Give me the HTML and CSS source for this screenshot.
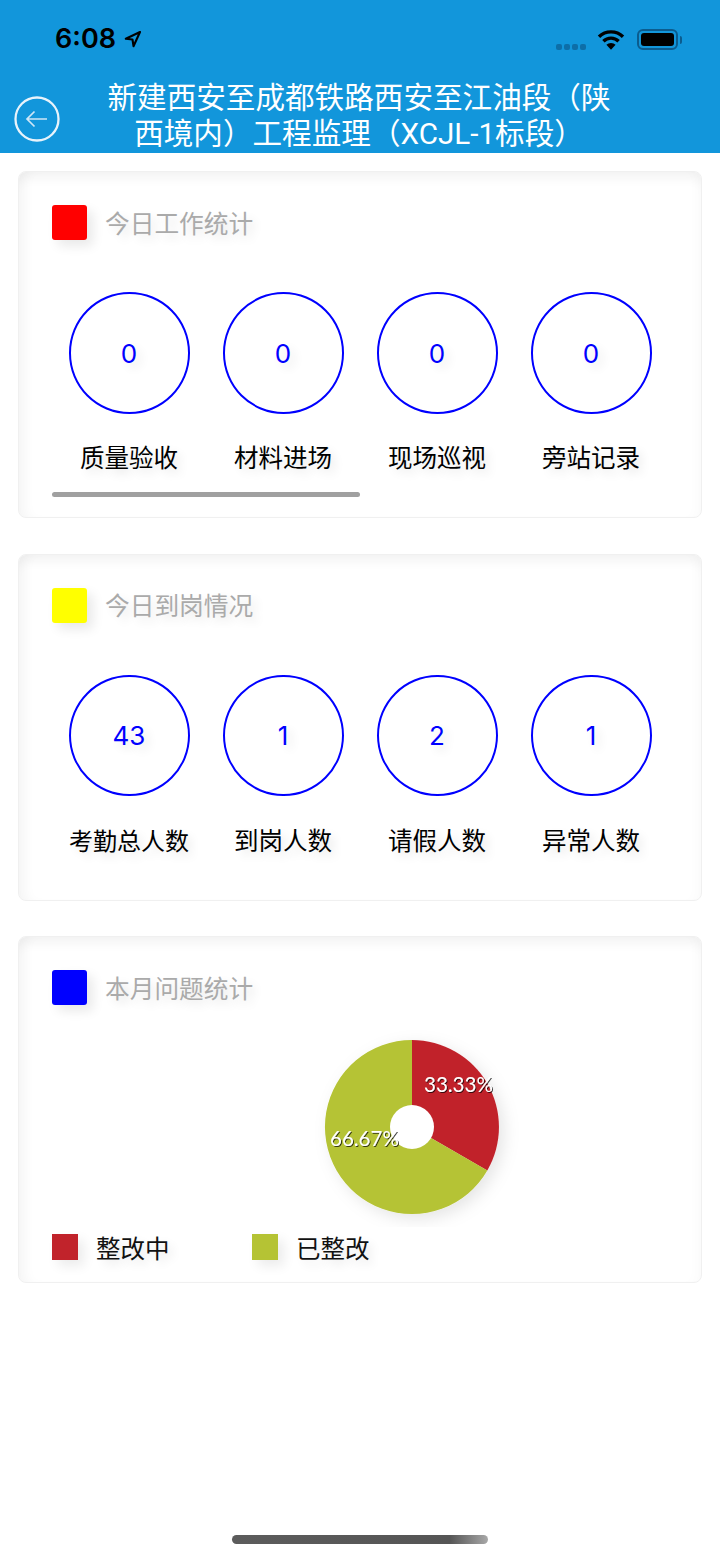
FILE: index.html
```html
<!doctype html>
<html>
<head>
<meta charset="utf-8">
<title>今日统计</title>
<link rel="stylesheet" href="styles.css">
</head>
<body>
<div class="page">
	<div class="top">
		<div class="status">
			<div class="time">6:08
				<svg class="loc" width="19" height="19" viewBox="0 0 19 19"><path d="M17 2 L2.800 8.700 L9.500 9.500 L10.500 16.200 Z" fill="none" stroke="#000" stroke-width="2.100" stroke-linejoin="round"/></svg>
			</div>
			<div class="sys">
				<div class="dots"><i></i><i></i><i></i><i></i></div>
				<svg class="wifi" width="28" height="21" viewBox="0 0 28 21"><path d="M2 7.800 A17 17 0 0 1 26 7.800 M6.400 12.200 A11 11 0 0 1 21.600 12.200" fill="none" stroke="#000" stroke-width="3.400"/><path d="M9.400 15.800 A6.500 6.500 0 0 1 18.600 15.800 L14 20.800 Z" fill="#000"/></svg>
				<div class="batt"><div class="batt-in"></div></div>
				<div class="batt-cap"></div>
			</div>
		</div>
		<div class="nav">
			<svg class="back" width="48" height="48" viewBox="0 0 48 48"><circle cx="24" cy="24" r="21.500" fill="none" stroke="#e8f3fb" stroke-width="2.300"/><path d="M34 24 H14 M21.500 16.500 L14 24 L21.500 31.500" fill="none" stroke="#cfe6f6" stroke-width="1.700"/></svg>
			<div class="title">新建西安至成都铁路西安至江油段（陕西境内）工程监理（XCJL-1标段）</div>
		</div>
	</div>

	<div class="card">
		<div class="card-head"><span class="mark red"></span><span class="card-title">今日工作统计</span></div>
		<div class="stats">
			<div class="stat"><div class="ring">0</div><div class="label">质量验收</div></div>
			<div class="stat"><div class="ring">0</div><div class="label">材料进场</div></div>
			<div class="stat"><div class="ring">0</div><div class="label">现场巡视</div></div>
			<div class="stat"><div class="ring">0</div><div class="label">旁站记录</div></div>
		</div>
		<div class="scroll"></div>
	</div>

	<div class="card">
		<div class="card-head"><span class="mark yellow"></span><span class="card-title">今日到岗情况</span></div>
		<div class="stats">
			<div class="stat"><div class="ring">43</div><div class="label long">考勤总人数</div></div>
			<div class="stat"><div class="ring">1</div><div class="label">到岗人数</div></div>
			<div class="stat"><div class="ring">2</div><div class="label">请假人数</div></div>
			<div class="stat"><div class="ring">1</div><div class="label">异常人数</div></div>
		</div>
	</div>

	<div class="card">
		<div class="card-head"><span class="mark blue"></span><span class="card-title">本月问题统计</span></div>
		<div class="chart">
			<svg width="240" height="200" viewBox="0 0 240 200">
				<defs>
					<filter id="pieshadow" x="-20%" y="-20%" width="150%" height="150%"><feDropShadow dx="5" dy="5" stdDeviation="8" flood-color="#000" flood-opacity="0.1"/></filter>
					<filter id="txtshadow" x="-10%" y="-20%" width="120%" height="150%"><feDropShadow dx="1" dy="1" stdDeviation="0.600" flood-color="#000" flood-opacity="0.7"/></filter>
				</defs>
				<g filter="url(#pieshadow)">
					<path d="M120 13 A87 87 0 0 1 195.300 143.500 L120 100 Z" fill="#c1232b"/>
					<path d="M195.300 143.500 A87 87 0 1 1 120 13 L120 100 Z" fill="#b5c334"/>
				</g>
				<circle cx="120" cy="100" r="22" fill="#fff"/>
				<g class="pct" filter="url(#txtshadow)">
					<text x="132" y="65">33.33%</text>
					<text x="38" y="119">66.67%</text>
				</g>
			</svg>
		</div>
		<div class="legend">
			<div class="leg"><span class="sw red2"></span><span class="leg-text">整改中</span></div>
			<div class="leg"><span class="sw green"></span><span class="leg-text">已整改</span></div>
		</div>
	</div>

	<div class="home"></div>
</div>
</body>
</html>
```

FILE: styles.css
```css
*{margin:0;padding:0;box-sizing:border-box;}
body{background:#fff;font-family:"Noto Sans CJK SC","Noto Sans",sans-serif;}
.page{width:720px;height:1558px;position:relative;overflow:hidden;display:flex;flex-direction:column;}

.top{height:153px;background:#1296db;flex:none;}
.status{height:80px;display:flex;justify-content:space-between;padding:19px 38px 0 55px;}
.time{font-family:Inter,"Liberation Sans",sans-serif;font-weight:600;font-size:27px;line-height:40px;color:#000;display:flex;align-items:center;height:40px;}
.loc{margin-left:7px;}
.sys{display:flex;align-items:flex-start;padding-top:10px;}
.dots{display:flex;gap:2px;margin-top:15px;margin-right:11px;}
.dots i{display:block;width:6px;height:6px;border-radius:2px;background:#0d6ea8;}
.wifi{margin-right:12px;}
.batt{width:41px;height:21px;border:2px solid #0b5c8e;border-radius:6px;padding:2px;}
.batt-in{height:100%;background:#000;border-radius:3px;}
.batt-cap{width:2px;height:8px;background:#0b5c8e;border-radius:0 2px 2px 0;margin-top:7px;margin-left:2px;}

.nav{display:grid;grid-template-columns:104px 510px 106px;height:73px;}
.back{margin:15px 0 0 13px;}
.title{font-family:Roboto,"Noto Sans CJK SC",sans-serif;font-size:29.600px;line-height:36px;color:#fff;text-align:center;}

.card{width:684px;height:347px;margin:18px 0 0 18px;border:1px solid #f0f0f0;border-radius:8px;box-shadow:inset 0 12px 12px -6px rgba(0,0,0,.05),inset 12px 0 12px -6px rgba(0,0,0,.04),inset -10px 0 12px -6px rgba(0,0,0,.02);padding:33px 0 0 33px;}
.card + .card{margin-top:35.500px;}
.card-head{display:flex;align-items:center;height:35px;}
.mark{width:35px;height:35px;border-radius:3px;box-shadow:6px 6px 12px rgba(0,0,0,.09);}
.red{background:#f00;}
.yellow{background:#ff0;}
.blue{background:#00f;}
.card-title{margin-left:18px;padding-bottom:2px;font-size:24.700px;color:#aaa;text-shadow:5px 5px 10px rgba(0,0,0,.1);}

.stats{display:flex;margin-top:52px;}
.stat{width:154px;display:flex;flex-direction:column;align-items:center;}
.ring{width:121px;height:121.500px;padding-top:1px;border:2px solid #00f;border-radius:50%;display:flex;align-items:center;justify-content:center;color:#00f;font-family:Inter,"Liberation Sans",sans-serif;font-size:26px;text-shadow:5px 5px 10px rgba(0,0,0,.1);}
.label{margin-top:25.500px;font-size:24.500px;line-height:36px;color:#000;white-space:nowrap;text-shadow:5px 5px 10px rgba(0,0,0,.1);}
.label.long{font-size:24px;}
.scroll{width:308px;height:5px;margin-top:17px;border-radius:3px;background:#a0a0a0;}

.chart{height:206px;margin-left:-33px;padding-left:273px;margin-top:22px;}
.pct text{font-family:Lato,"Liberation Sans",sans-serif;font-size:20.500px;fill:#fff;}
.legend{display:flex;}
.leg{width:200px;display:flex;align-items:center;height:28px;}
.sw{width:26px;height:26px;box-shadow:6px 6px 12px rgba(0,0,0,.08);}
.red2{background:#c1232b;}
.green{background:#b5c334;}
.leg-text{margin-left:18px;font-size:24.500px;color:#111;text-shadow:5px 5px 10px rgba(0,0,0,.1);}

.home{position:absolute;left:232px;top:1535px;width:256px;height:9px;border-radius:5px;background:linear-gradient(90deg,#5c5c5c 0,#555 85%,#a8a8a8 100%);}
```
